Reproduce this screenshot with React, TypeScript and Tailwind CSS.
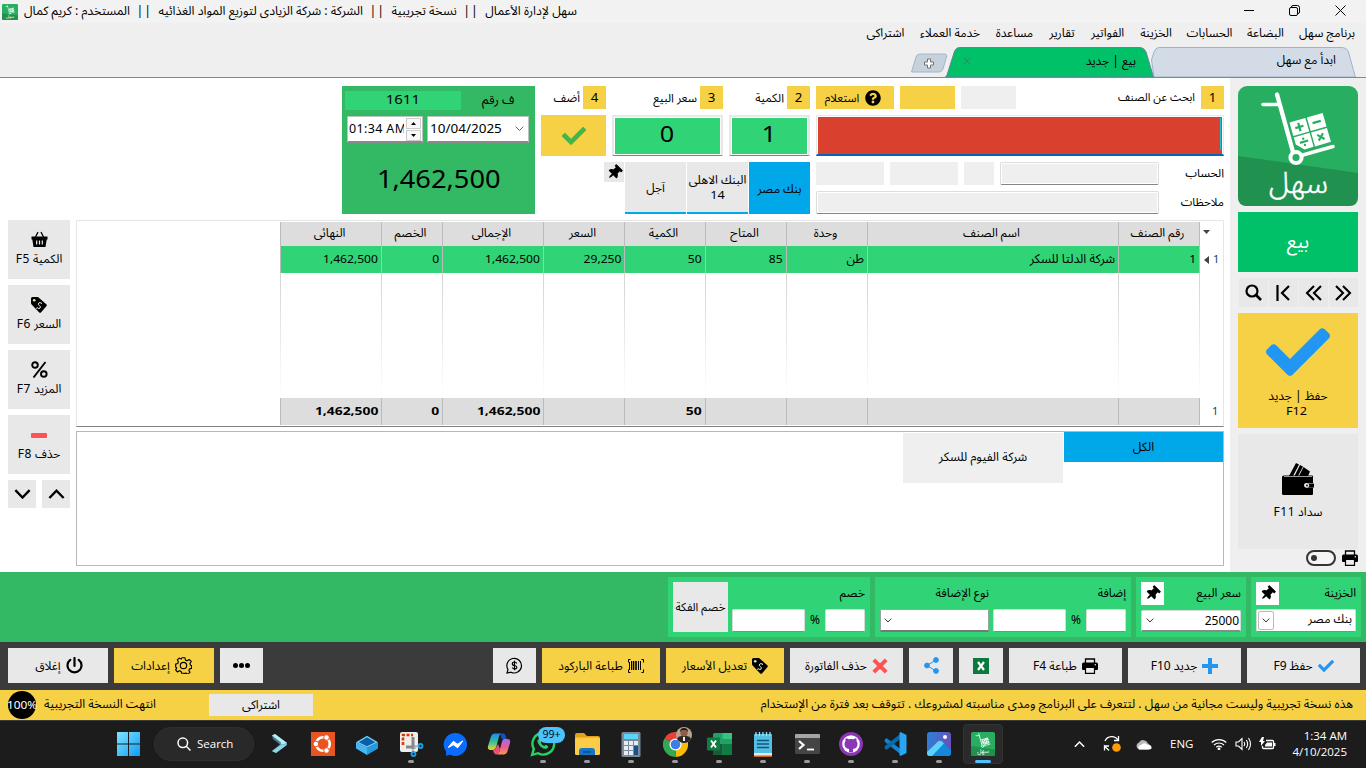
import type { ReactNode } from 'react';
import { FaCheck, FaQuestionCircle, FaThumbtack } from 'react-icons/fa';

const FONT = "font-['Noto_Sans','Noto_Sans_Arabic','DejaVu_Sans',sans-serif]";

function SahlLogo({ size }: { size: number }) {
  return (
    <svg width={size} height={size} viewBox="0 0 120 120">
      <rect width="120" height="120" rx="9" fill="#27ae60" />
      <path d="M0 70 L120 87 V111 Q120 120 111 120 H9 Q0 120 0 111 Z" fill="#219150" />
      <g stroke="#fff" fill="none" strokeLinecap="round" strokeWidth="3.6">
        <path d="M25 18.500H41" />
        <path d="M39 8.500L55 66" strokeWidth="4.400" />
        <path d="M63 69.500L95 60.500" />
        <circle cx="58" cy="71.500" r="5.600" strokeWidth="4" fill="#27ae60" />
      </g>
      <g transform="translate(51.500 36.500) rotate(-16)">
        <rect x="0" y="0" width="16.500" height="14" fill="#fff" />
        <rect x="18" y="0" width="16.500" height="14" fill="#fff" />
        <path d="M0 15.500h16.500V30H7L0 23z" fill="#fff" />
        <rect x="18" y="15.500" width="16.500" height="14.500" fill="#fff" />
        <path d="M4 7h8.500M8.250 2.800v8.500M22 7h8.500M4.500 22.500h8.500M23.200 19.500l6 6M29.200 19.500l-6 6" stroke="#27ae60" strokeWidth="2.200" />
        <circle cx="8.700" cy="19.300" r="1.200" fill="#27ae60" />
        <circle cx="8.700" cy="25.800" r="1.200" fill="#27ae60" />
      </g>
      <text x="60.500" y="107" textAnchor="middle" fill="#fff" stroke="#fff" strokeWidth=".5" fontSize="30" fontFamily="'Noto Sans Arabic','DejaVu Sans',sans-serif" fontWeight="300">
        سهل
      </text>
    </svg>
  );
}

function Num({ n }: { n: string }) {
  return <div className="flex h-[23px] w-[23px] items-center justify-center bg-[#f6d145] text-[12px]"><span className="scale-x-110">{n}</span></div>;
}

function Pin() {
  return <FaThumbtack size={15} className="rotate-45" />;
}

function TagIcon({ size = 16 }: { size?: number }) {
  return (
    <svg width={size} height={size} viewBox="0 0 16 16">
      <path d="M0 1.500Q0 0 1.500 0H7l8.300 7.200q1.100 1 0 2L10.200 15.300q-1.100 1-2.200 0L.6 7.500Q0 6.900 0 6.100z" fill="#000" />
      <circle cx="3.200" cy="3.200" r="1.300" fill="#f4e3a0" />
      <path d="M10.600 6.300Q8.800 4.900 7.700 6.100T8.300 8.500 9.100 11 6 10.600M11 5.800l-.8.800M6 10.800l-.8.700" stroke="#f0f0f0" strokeWidth="1" fill="none" />
    </svg>
  );
}

function PrinterIcon({ size = 17 }: { size?: number }) {
  return (
    <svg width={size} height={size} viewBox="0 0 16 16">
      <path d="M3.500 5V1h9v4" fill="none" stroke="#000" strokeWidth="1.300" />
      <path d="M1.500 4.500h13Q16 4.500 16 6v5q0 1-1 1h-2v-1.500H3V12H1q-1 0-1-1V6q0-1.500 1.500-1.500z" fill="#000" />
      <path d="M3.500 9.500v5.800h9V9.500z" fill="#eee" stroke="#000" strokeWidth="1.200" />
      <circle cx="13.300" cy="6.800" r=".8" fill="#eee" />
    </svg>
  );
}

function Chevron({ up = false, size = 8, w = 1 }: { up?: boolean; size?: number; w?: number }) {
  return (
    <svg width={size} height={size * 0.6} viewBox="0 0 10 6" fill="none" stroke="currentColor" strokeWidth={w}>
      <path d={up ? 'M.8 5.300L5 1l4.200 4.300' : 'M.8.700L5 5 9.200.700'} />
    </svg>
  );
}

function TitleBar() {
  return (
    <div className="flex h-[23px] items-center justify-between bg-[#f2f2f2] pl-[2px] text-[12px] text-black">
      <div className="flex items-center gap-[6px]">
        <SahlLogo size={16} />
        <div dir="rtl" className="flex w-[553px] items-center justify-between whitespace-nowrap text-[12.300px]">
          <span>سهل لإدارة الأعمال</span>
          <span className="tracking-[1px]">||</span>
          <span>نسخة تجريبية</span>
          <span className="tracking-[1px]">||</span>
          <span>الشركة : شركة الزيادى لتوزيع المواد الغذائيه</span>
          <span className="tracking-[1px]">||</span>
          <span>المستخدم : كريم كمال</span>
        </div>
      </div>
      <div className="flex items-center gap-[35px] pr-[20px] pb-[2px]">
        <div className="h-px w-[10px] bg-black" />
        <svg width="11" height="11" viewBox="0 0 11 11" fill="none" stroke="#000">
          <rect x=".5" y="2.500" width="8" height="8" rx="1.500" />
          <path d="M2.500 2.500V2Q2.500.500 4 .500h4.500q2 0 2 2V7q0 1.500-1.500 1.500" />
        </svg>
        <svg width="11" height="11" viewBox="0 0 11 11" stroke="#000"><path d="M.5.500l10 10M10.500.500l-10 10" /></svg>
      </div>
    </div>
  );
}

const menus: [string, number][] = [
  ['برنامج سهل', 56], ['البضاعة', 39], ['الحسابات', 45], ['الخزينة', 34], ['الفواتير', 35],
  ['تقارير', 28], ['مساعدة', 39], ['خدمة العملاء', 62], ['اشتراكى', 39],
];

function MenuBar() {
  return (
    <div dir="rtl" className="flex h-[22px] items-center gap-[14px] bg-[#efefef] pr-[11px] pb-[2px] text-[12px]">
      {menus.map(([m, w]) => (
        <div key={m} className="flex justify-center whitespace-nowrap" style={{ width: w }}>{m}</div>
      ))}
    </div>
  );
}

function Tabs() {
  return (
    <div className="flex h-[33px] items-end border-b border-[#6f8dab] bg-[#efefef] pl-[910px]">
      <div className="relative mb-[4px] flex h-[20px] w-[38px] items-center justify-center">
        <svg className="absolute inset-0" width="38" height="20" viewBox="0 0 38 20">
          <path d="M1.500 19L6 4Q7 1 10 1H34Q37.500 1 36.500 4L33 16Q32 19 29 19Z" fill="#c6d1dc" stroke="#a3b6c9" />
          <path d="M17.500 6h3v3h3v3h-3v3h-3v-3h-3V9h3z" fill="#fff" stroke="#666" strokeWidth=".9" />
        </svg>
      </div>
      <div className="relative z-10 -ml-[3px] flex h-[31px] w-[209px] items-center justify-between pb-[2px] pr-[18px] pl-[18px]">
        <svg className="absolute inset-0" width="209" height="31" viewBox="0 0 210 31" preserveAspectRatio="none">
          <path d="M.5 31Q2 30 3 26L9 7Q10.500 1.500 15 1.500H196Q200 1.500 202 6L208 26Q209 30 209.500 31Z" fill="#00c168" stroke="#5b86a0" />
        </svg>
        <svg className="relative" width="8" height="8" viewBox="0 0 8 8" stroke="#2f8a60" fill="none"><path d="M.5.500l7 7M7.500.500l-7 7" /></svg>
        <span dir="rtl" className="relative text-[12px]">بيع | جديد</span>
      </div>
      <div className="relative -ml-[4px] flex h-[31px] w-[206px] items-center justify-end pr-[20px] pb-[2px]">
        <svg className="absolute inset-0" width="206" height="31" viewBox="0 0 206 31">
          <path d="M4 31L1.500 14L4 6Q5.500 1.500 9 1.500H191Q197 1.500 198.500 6L204 26Q205 30 205.500 31Z" fill="#d3dce6" stroke="#9db4ca" />
        </svg>
        <span dir="rtl" className="relative text-[12.200px]">ابدأ مع سهل</span>
      </div>
    </div>
  );
}

function InvoicePanel() {
  return (
    <div className="flex h-[128px] w-[193px] flex-col bg-[#33b864] pt-[5px]">
      <div className="flex h-[19px] items-center pl-[3px]">
        <div className="flex h-[19px] w-[116px] items-center justify-center bg-[#30d375] pb-px text-[13px]"><span className="scale-x-[1.15]">1611</span></div>
        <span dir="rtl" className="ml-[21px] text-[12.500px]">ف رقم</span>
      </div>
      <div className="mt-[6px] flex gap-[4px] pl-[5px]">
        <div className="flex h-[27px] w-[76px] items-center overflow-hidden border border-b-2 border-[#b9c4bd] border-b-[#8a8a8a] bg-white">
          <span className="w-[56px] overflow-hidden pl-px text-[12.500px] tracking-[0.350px] whitespace-nowrap">01:34 AM</span>
          <div className="ml-[2px] flex flex-col gap-px">
            <div className="flex h-[11px] w-[15px] items-center justify-center border border-[#ccc] bg-[#f8f8f8]"><svg width="5" height="3"><path d="M0 3L2.500 0 5 3z" /></svg></div>
            <div className="flex h-[11px] w-[15px] items-center justify-center border border-[#ccc] bg-[#f8f8f8]"><svg width="5" height="3"><path d="M0 0L2.500 3 5 0z" /></svg></div>
          </div>
        </div>
        <div className="flex h-[27px] w-[102px] items-center justify-between border border-b-2 border-[#b9c4bd] border-b-[#8a8a8a] bg-white pr-[4px] pl-[2px] text-[12px]">
          <span className="origin-left scale-x-[1.125]">10/04/2025</span><span className="text-[#555]"><Chevron size={9} /></span>
        </div>
      </div>
      <div className="flex h-[72px] items-center justify-center text-[25px]"><span className="scale-x-[1.09]">1,462,500</span></div>
    </div>
  );
}

function LabelRow({ n, children }: { n: string; children: ReactNode }) {
  return (
    <div className="flex h-[23px] items-center justify-end gap-[3px] text-[11.800px]">
      <span dir="rtl" className="whitespace-nowrap">{children}</span>
      <Num n={n} />
    </div>
  );
}

const numBox = 'mt-[6px] flex h-[41px] items-center justify-center border-2 border-b border-[#e8e8e8] border-b-[#808080] bg-[#30d375] bg-clip-padding pb-[3px] text-[21px] shadow-[inset_0_0_0_1px_#fff]';
const payTab = 'flex h-[52px] items-center justify-center text-center text-[12px] leading-[15px]';

function EntryArea() {
  return (
    <div className="flex h-[134px] gap-[6px] pl-[342px]">
      <InvoicePanel />
      <div className="w-[269px]">
        <div className="flex gap-[6px]">
          <div className="w-[65px]">
            <LabelRow n="4">أضف</LabelRow>
            <div className="mt-[6px] flex h-[41px] items-center justify-center bg-[#f6d145] text-[#41b649]"><FaCheck size={24} /></div>
          </div>
          <div className="w-[111px]">
            <LabelRow n="3">سعر البيع</LabelRow>
            <div className={numBox}><span className="scale-x-[1.2]">0</span></div>
          </div>
          <div className="w-[81px]">
            <LabelRow n="2">الكمية</LabelRow>
            <div className={numBox}><span className="scale-x-[1.2]">1</span></div>
          </div>
        </div>
        <div className="mt-[6px] flex justify-end gap-px">
          <div className="flex h-[20px] w-[20px] items-center justify-center bg-[#e8e8e8]"><Pin /></div>
          <div className={`${payTab} w-[61px] border-b-2 border-[#00a8ea] bg-[#e8e8e8]`}>آجل</div>
          <div className={`${payTab} w-[61px] border-b-2 border-[#00a8ea] bg-[#e8e8e8] whitespace-nowrap`}><span>البنك الاهلى<br /><span className="inline-block scale-x-110 text-[11.500px]">14</span></span></div>
          <div className={`${payTab} w-[61px] bg-[#00a8ea]`}>بنك مصر</div>
        </div>
      </div>
      <div className="w-[408px]">
        <div className="flex h-[23px] gap-[6px]">
          <div className="flex w-[78px] items-center justify-center gap-[6px] bg-[#f6d145] pr-[4px]"><span className="text-[11.500px]">استعلام</span><FaQuestionCircle size={16} /></div>
          <div className="w-[55px] bg-[#f6d145]" />
          <div className="w-[55px] bg-[#efefef]" />
          <div className="flex flex-1 items-center justify-end gap-[6px] text-[11.200px]"><span dir="rtl">ابحث عن الصنف</span><Num n="1" /></div>
        </div>
        <div className="mt-[6px] flex h-[41px] justify-end border border-b-2 border-[#e8e8e8] border-b-[#0067c0] bg-white p-px pb-0">
          <div className="flex flex-1 justify-end bg-[#d9412e] pr-px"><div className="mt-px mb-1 w-px bg-[#26bed1]" /></div>
        </div>
        <div className="mt-[6px] flex h-[23px] gap-[6px]">
          <div className="w-[68px] bg-[#efefef]" />
          <div className="w-[68px] bg-[#efefef]" />
          <div className="w-[30px] bg-[#efefef]" />
          <div className="w-[159px] rounded-[2px] border border-[#ddd] border-b-[#858585] bg-[#efefef] shadow-[inset_0_0_0_1px_#fff]" />
          <div dir="rtl" className="flex-1 text-[11.900px] leading-[21px]">الحساب</div>
        </div>
        <div className="mt-[6px] flex h-[23px] gap-[6px]">
          <div className="w-[343px] rounded-[2px] border border-[#ddd] border-b-[#858585] bg-[#efefef] shadow-[inset_0_0_0_1px_#fff]" />
          <div dir="rtl" className="flex-1 text-[11.700px] leading-[21px]">ملاحظات</div>
        </div>
      </div>
    </div>
  );
}

function SideButton({ icon, label, f }: { icon: ReactNode; label: string; f: string }) {
  return (
    <div className="flex h-[59px] w-[62px] flex-col items-center bg-[#e8e8e8] pt-[11px] text-[12px]">
      <div className="flex h-[17px] items-center">{icon}</div>
      <span dir="rtl" className="mt-[2px] flex gap-[3px] leading-[18px] whitespace-nowrap">{label}<span className="tracking-[0.600px]">{f}</span></span>
    </div>
  );
}

function SideButtons() {
  return (
    <div className="flex w-[62px] flex-col gap-[6px]">
      <SideButton label="الكمية" f="F5" icon={
        <svg width="17" height="17" viewBox="0 0 17 17"><path d="M4.500 6L7 1M12.500 6L10 1" stroke="#000" strokeWidth="1.300" /><path d="M.5 5.500h16v3h-.8L14.500 16h-12L1.300 8.500H.5z" /><path d="M5.700 9.500v4M8.500 9.500v4M11.300 9.500v4" stroke="#eee" strokeWidth="1.200" /></svg>} />
      <SideButton label="السعر" f="F6" icon={<TagIcon />} />
      <SideButton label="المزيد" f="F7" icon={
        <svg width="17" height="17" viewBox="0 0 17 17" fill="none" stroke="#000" strokeWidth="1.900"><circle cx="4" cy="4" r="2.800" /><circle cx="12.800" cy="13" r="2.800" /><path d="M14.500 1L2.500 16.500" /></svg>} />
      <SideButton label="حذف" f="F8" icon={<div className="mt-px h-[5px] w-[16px] rounded-[1px] bg-[#ff5252]" />} />
      <div className="flex gap-[6px]">
        <div className="flex h-[28px] w-[28px] items-center justify-center bg-[#e8e8e8]"><Chevron size={17} w={1.400} /></div>
        <div className="flex h-[28px] w-[28px] items-center justify-center bg-[#e8e8e8]"><Chevron up size={17} w={1.400} /></div>
      </div>
    </div>
  );
}

const columns = [
  { h: 'النهائى', v: '1,462,500', t: '1,462,500' },
  { h: 'الخصم', v: '0', t: '0' },
  { h: 'الإجمالى', v: '1,462,500', t: '1,462,500' },
  { h: 'السعر', v: '29,250', t: '' },
  { h: 'الكمية', v: '50', t: '50' },
  { h: 'المتاح', v: '85', t: '' },
  { h: 'وحدة', v: 'طن', t: '' },
  { h: 'اسم الصنف', v: 'شركة الدلتا للسكر', t: '' },
  { h: 'رقم الصنف', v: '1', t: '' },
];
const gridCols = 'grid grid-cols-[101px_61px_101px_81px_81px_81px_81px_251px_81px_24px] pl-[203px]';

function ItemsTable() {
  return (
    <div className="h-[207px] border border-[#e6e6e6] border-b-[#808080] bg-white pt-px text-[12px]">
      <div className={`${gridCols} h-[24px]`}>
        {columns.map((c) => <div key={c.h} className="flex items-center justify-center border-l border-[#bbb] bg-[#ddd] pr-[3px] pb-[2px]">{c.h}</div>)}
        <div className="border-l border-[#bbb] pt-[8px] pl-[3px]"><svg width="7" height="4"><path d="M0 0h7L3.500 4z" fill="#444" /></svg></div>
      </div>
      <div className={`${gridCols} h-[27px]`}>
        {columns.map((c) => <div key={c.h} className={`flex items-center justify-end border-l border-[#bbb] bg-[#30d375] pr-[3px] whitespace-nowrap ${/\d/.test(c.v) ? 'text-[11px] pb-px' : 'text-[12.500px]'}`}><span className={/\d/.test(c.v) ? 'origin-right scale-x-[1.1]' : ''}>{c.v}</span></div>)}
        <div className="flex items-center gap-[4px] border-l border-[#bbb] pl-[4px] text-[11px] text-[#1b3f6b]"><svg width="5" height="8"><path d="M5 0v8L0 4z" fill="#444" /></svg>1</div>
      </div>
      <div className={`${gridCols} h-[125px]`}>
        {columns.map((c) => <div key={c.h} className="w-px bg-linear-to-b from-[#d4d4d4] to-white" />)}
        <div className="w-px bg-linear-to-b from-[#d4d4d4] to-white" />
      </div>
      <div className={`${gridCols} h-[27px] text-[11px] font-bold`}>
        {columns.map((c) => <div key={c.h} className="flex items-center justify-end border-l border-[#bbb] bg-[#ddd] pr-[3px] pb-px"><span className="origin-right scale-x-[1.26]">{c.t}</span></div>)}
        <div className="flex items-center border-l border-[#bbb] pl-[12px] text-[11px] font-normal text-[#1b3f6b]">1</div>
      </div>
    </div>
  );
}

const navCell = 'flex flex-1 items-center justify-center bg-[#e8e8e8] pr-px';

function Sidebar() {
  return (
    <div className="flex w-[136px] flex-col bg-[#efefef] pt-[8px] pl-[8px]">
      <SahlLogo size={120} />
      <div className="mt-[6px] flex h-[60px] w-[120px] items-center justify-center bg-[#00c168] pb-[2px] text-[19px] text-white">بيع</div>
      <div className="mt-[6px] ml-px flex h-[29px] w-[119px] gap-px">
        <div className={navCell}><svg width="17" height="17" viewBox="0 0 17 17" fill="none" stroke="#000" strokeWidth="2.200"><circle cx="7" cy="7" r="5.500" /><path d="M11 11l5 5" strokeWidth="2.600" /></svg></div>
        <div className={navCell}><svg width="14" height="16" viewBox="0 0 14 16" fill="none" stroke="#000" strokeWidth="2.200"><path d="M1.500 0v16M13 1L6 8l7 7" /></svg></div>
        <div className={navCell}><svg width="17" height="16" viewBox="0 0 17 16" fill="none" stroke="#000" strokeWidth="2.100"><path d="M9 1L2 8l7 7M16 1L9 8l7 7" /></svg></div>
        <div className={navCell}><svg width="17" height="16" viewBox="0 0 17 16" fill="none" stroke="#000" strokeWidth="2.100"><path d="M1 1l7 7-7 7M8 1l7 7-7 7" /></svg></div>
      </div>
      <div className="mt-[6px] flex h-[115px] w-[120px] flex-col items-center bg-[#f6d145] pt-[7px] text-[12px] leading-[15px]">
        <FaCheck size={64} color="#2196f3" />
        <span dir="rtl" className="mt-[4px]">حفظ | جديد</span>
        <span className="-ml-[2px] scale-x-110 text-[11.500px]">F12</span>
      </div>
      <div className="mt-[6px] flex h-[115px] w-[120px] flex-col items-center bg-[#e8e8e8] pt-[29px] text-[12px]">
        <svg width="32" height="32" viewBox="0 0 32 32">
          <path d="M7 13L14 0l3 1.500L11 13zM12.500 13L18 2l3 1.500L16 13zM17 13l4.500-9L28 8.500 26 13z" />
          <path d="M2 12.500h28q1 0 1 1V20h-6.500q-2.500 0-2.500 2.300t2.500 2.200H31V31q0 1-1 1H1.500Q0 32 0 30.500V14q0-1.500 2-1.500z" />
          <path d="M2 13.500H30" stroke="#ddd" strokeWidth=".7" />
          <path d="M25 20.500h7v4h-7q-2-2 0-4z" /><circle cx="25" cy="22.500" r="2.200" fill="#eee" /><circle cx="25" cy="22.500" r=".9" />
        </svg>
        <span dir="rtl" className="mt-[8px] flex gap-[3px]">سداد<span className="tracking-[0.500px]">F11</span></span>
      </div>
      <div className="mt-px flex w-[120px] items-center justify-end gap-[6px]">
        <div className="flex h-[16px] w-[30px] items-center rounded-full border-2 border-[#333] bg-[#f4f4f4] pl-[3px]"><div className="h-[6px] w-[6px] rounded-full bg-[#333]" /></div>
        <PrinterIcon size={16} />
      </div>
    </div>
  );
}

const group = 'flex h-[60px] bg-[#30d375] p-[5px]';
const input = 'h-[23px] rounded-[2px] border border-[#d5dcd8] border-b-[#8a8a8a] bg-white';
const glabel = 'h-[23px] text-[12px] leading-[21px] whitespace-nowrap';

function TotalsBar() {
  return (
    <div className="flex h-[70px] gap-[5px] bg-[#33b864] pt-[5px] pl-[668px]">
      <div className={`${group} w-[202px] gap-[4px]`}>
        <div className="flex h-[50px] w-[55px] items-center justify-center bg-[#e8e8e8] text-[11.500px] whitespace-nowrap">خصم الفكة</div>
        <div className="w-[133px]">
          <div dir="rtl" className={glabel}>خصم</div>
          <div className="mt-1 flex items-center justify-between text-[12px]"><div className={`${input} w-[73px]`} /><span className="-mt-[2px]">%</span><div className={`${input} w-[40px]`} /></div>
        </div>
      </div>
      <div className={`${group} w-[256px] gap-[4px]`}>
        <div className="w-[109px]">
          <div dir="rtl" className={glabel}>نوع الإضافة</div>
          <div className="mt-1 flex h-[23px] items-center border border-b-2 border-[#8fa99a] border-b-[#777] bg-white pl-[3px]"><Chevron size={8} /></div>
        </div>
        <div className="w-[133px]">
          <div dir="rtl" className={glabel}>إضافة</div>
          <div className="mt-1 flex items-center justify-between text-[12px]"><div className={`${input} w-[73px]`} /><span className="-mt-[2px]">%</span><div className={`${input} w-[40px]`} /></div>
        </div>
      </div>
      <div className={`${group} w-[110px] flex-col`}>
        <div className="flex justify-between"><div className="flex h-[23px] w-[23px] items-center justify-center bg-white"><Pin /></div><span dir="rtl" className={glabel}>سعر البيع</span></div>
        <div className={`${input} mt-[5px] flex items-center justify-between border-b-2 pr-px pl-[4px] text-[12px]`}><Chevron size={8} />25000</div>
      </div>
      <div className={`${group} w-[110px] flex-col`}>
        <div className="flex justify-between"><div className="flex h-[23px] w-[23px] items-center justify-center bg-white"><Pin /></div><span dir="rtl" className={glabel}>الخزينة</span></div>
        <div className={`${input} mt-1 flex items-center justify-between pr-[3px] pl-px text-[12px]`}><div className="flex h-[19px] w-[16px] items-center justify-center rounded-[2px] border border-[#bbb]"><Chevron size={8} /></div><span className="-mt-[3px]">بنك مصر</span></div>
      </div>
    </div>
  );
}

const btn = 'flex h-[35px] items-center justify-center gap-[5px] text-[12px] whitespace-nowrap';

function ActionBar() {
  return (
    <div className="flex h-[48px] gap-[6px] bg-[#3b3b3b] pt-[6px] pr-[6px] pl-[8px]">
      <div dir="rtl" className={`${btn} w-[100px] bg-[#e8e8e8] pl-[2px]`}>
        <svg width="17" height="17" viewBox="0 0 17 17" fill="none" stroke="#000" strokeWidth="2.200" strokeLinecap="round"><path d="M4.300 2.800a7 7 0 1 0 8.400 0M8.500 1v8" /></svg>إغلاق
      </div>
      <div dir="rtl" className={`${btn} w-[100px] bg-[#f6d145] pr-[5px]`}>
        <svg width="17" height="17" viewBox="0 0 24 24" fill="none" stroke="#000" strokeWidth="1.600"><path d="M10 1h4l.8 3.400 2.300 1 3-1.900 2.800 2.800-1.900 3 .9 2.300 1.600.4v4l-3 .7-.9 2.200 1.500 2.700-2.900 2.800-2.800-1.700-2 .8L12.500 23h-3l-1-2.700-2.300-.8-2.900 1.500-2.400-2.800L2.400 15.500.9 14v-4l3-.8.9-2.300L3.200 4 6 1.500 8.600 3z" strokeLinejoin="round" /><circle cx="12" cy="12" r="4.500" /></svg>إعدادات
      </div>
      <div className={`${btn} w-[43px] gap-px bg-[#e8e8e8]`}>
        <i className="h-[5px] w-[5px] rounded-full bg-black" /><i className="h-[5px] w-[5px] rounded-full bg-black" /><i className="h-[5px] w-[5px] rounded-full bg-black" />
      </div>
      <div className="flex-1" />
      <div className={`${btn} w-[43px] bg-[#e8e8e8]`}>
        <svg width="17" height="17" viewBox="0 0 17 17" fill="none" stroke="#000" strokeWidth="1.200"><path d="M1 16l1-3.500A7.300 7.300 0 1 1 5 15.200Z" /><path d="M10.800 6.500Q10 5 8.500 5 6.300 5 6.300 6.700T8.500 8.500t2.300 1.800T8.500 12Q7 12 6.200 10.500M8.500 3.700v9.600" /></svg>
      </div>
      <div dir="rtl" className={`${btn} w-[118px] bg-[#f6d145]`}>
        <svg width="16" height="14" viewBox="0 0 16 14" fill="none" stroke="#000"><path d="M2.500 .5H.5v3M.5 10.500v3h2M13.500 .5h2v3M15.500 10.500v3h-2" /><path d="M3.500 2v9M12.500 2v9M10.500 2v9M1.500 3v8" /><path d="M5.500 2v9M8 2v9" strokeWidth="1.600" /></svg>طباعة الباركود
      </div>
      <div dir="rtl" className={`${btn} w-[118px] bg-[#f6d145]`}><TagIcon size={16} />تعديل الأسعار</div>
      <div dir="rtl" className={`${btn} w-[113px] bg-[#e8e8e8]`}>
        <svg width="16" height="16" viewBox="0 0 16 16" stroke="#ff5252" strokeWidth="4"><path d="M1.800 1.800l12.400 12.400M14.200 1.800L1.800 14.200" /></svg>حذف الفاتورة
      </div>
      <div className={`${btn} w-[44px] bg-[#e8e8e8]`}>
        <svg width="15" height="17" viewBox="0 0 15 17" fill="#2196f3" stroke="#2196f3"><path d="M12 3L3 8.500l9 5.500" fill="none" /><circle cx="12" cy="3" r="2.400" /><circle cx="3" cy="8.500" r="2.400" /><circle cx="12" cy="14" r="2.400" /></svg>
      </div>
      <div className={`${btn} w-[44px] bg-[#e8e8e8]`}>
        <svg width="16" height="16" viewBox="0 0 16 16"><rect width="16" height="16" fill="#0b7a3e" /><path d="M5 4l6 8M11 4l-6 8" stroke="#fff" strokeWidth="2.200" /></svg>
      </div>
      <div dir="rtl" className={`${btn} w-[113px] bg-[#e8e8e8]`}><PrinterIcon size={16} />طباعة F4</div>
      <div dir="rtl" className={`${btn} w-[113px] bg-[#e8e8e8]`}>
        <svg width="16" height="16" viewBox="0 0 16 16"><path d="M6 0h4v6h6v4h-6v6H6v-6H0V6h6z" fill="#2196f3" /></svg>جديد F10
      </div>
      <div dir="rtl" className={`${btn} w-[113px] bg-[#e8e8e8]`}><FaCheck size={16} color="#2196f3" />حفظ F9</div>
    </div>
  );
}

function TrialBar() {
  return (
    <div className="flex h-[30px] items-center bg-[#f6d145] pr-[13px] pl-[8px] text-[12px]">
      <div className="flex h-[28px] w-[28px] shrink-0 items-center justify-center rounded-full bg-black text-[11px] text-white"><span className="scale-x-[1.08]">100%</span></div>
      <div dir="rtl" className="ml-[7px] w-[113px] pb-[2px] text-[12.200px] whitespace-nowrap">انتهت النسخة التجريبية</div>
      <div className="ml-[53px] flex h-[22px] w-[104px] items-center justify-center bg-[#e8e8e8]">اشتراكى</div>
      <div dir="rtl" className="flex-1 pb-[2px] text-[12.250px] whitespace-nowrap">هذه نسخة تجريبية وليست مجانية من سهل . لتتعرف على البرنامج ومدى مناسبته لمشروعك . تتوقف بعد فترة من الإستخدام</div>
    </div>
  );
}

const apps: { id: string; run?: boolean; icon: ReactNode }[] = [
  { id: 'shell', icon: <svg width="24" height="24" viewBox="0 0 24 24"><path d="M5 3.500L8 2l12 9v2L9 21l-4-2 8-6.500z" fill="#5aa9c0" /><path d="M5 3.500L8 2l12 9-5 1.500z" fill="#bcebf0" /><path d="M5 19l10-6.500h5L9 21z" fill="#8fd6e2" /><path d="M5 3.500l9 7-1 2L6 7z" fill="#3c8098" /></svg> },
  { id: 'ubuntu', icon: <svg width="24" height="24" viewBox="0 0 24 24"><rect width="24" height="24" fill="#e95420" /><circle cx="12" cy="12" r="6.800" fill="none" stroke="#fff" strokeWidth="2.600" /><g fill="#fff" stroke="#e95420" strokeWidth="1"><circle cx="4.800" cy="12" r="2.800" /><circle cx="15.500" cy="5.500" r="2.800" /><circle cx="15.500" cy="18.500" r="2.800" /></g></svg> },
  { id: 'sandbox', icon: <svg width="24" height="22" viewBox="0 0 26 24"><path d="M1 10l12 6v8L1 17z" fill="#45b8f3" /><path d="M25 10l-12 6v8l12-7z" fill="#2799e0" /><path d="M13 3l12 7-12 6L1 10z" fill="#6ed0fa" /><path d="M13 4.500l9 5.500-9 4.500L4 10z" fill="#0a5ea8" /></svg> },
  { id: 'snip', run: true, icon: <svg width="26" height="26" viewBox="0 0 26 26"><rect x="2" y="1" width="18" height="20" rx="2" fill="#eee" /><path d="M5 14V4h10" fill="none" stroke="#d83b01" strokeWidth="2.600" strokeDasharray="3 1.500" /><path d="M15 6v12M8 16h10" stroke="#888" strokeWidth="3" /><path d="M16 17l5-3M15 18v4" stroke="#bbb" strokeWidth="2" /><g fill="none" stroke="#1ba0e8" strokeWidth="1.800"><circle cx="22.500" cy="15" r="2" /><circle cx="15.500" cy="23" r="2" /></g></svg> },
  { id: 'messenger', icon: <svg width="25" height="25" viewBox="0 0 24 24"><path d="M12 1a11 11 0 1 1-5.500 20.500L3 23v-4.300A11 11 0 0 1 12 1z" fill="#0a6cff" /><path d="M5 15l5-6 4 3 5-3.500-5 6.500-4-3z" fill="#fff" stroke="#fff" /></svg> },
  { id: 'copilot', icon: (
    <svg width="24" height="24" viewBox="0 0 24 24"><defs><linearGradient id="ca" x1="0" y1="0" x2="0" y2="1"><stop offset="0" stopColor="#1b8af0" /><stop offset=".5" stopColor="#35bf9c" /><stop offset="1" stopColor="#f5cf2f" /></linearGradient><linearGradient id="cb" x1="0" y1="0" x2="0" y2="1"><stop offset="0" stopColor="#a26be8" /><stop offset=".55" stopColor="#ee5c94" /><stop offset="1" stopColor="#f79a46" /></linearGradient></defs><path d="M13 1.500h3q2 0 2.600 2L19.500 7H15z" fill="#1552c0" /><path d="M8 1.500h6q-1.500 1-2 3L9.500 14q-1 4-4 4H4Q0 18 1 14L4 4.500Q5 1.500 8 1.500z" fill="url(#ca)" /><path d="M17 7h3q4 0 3 4l-2.600 8.500q-1 3-4 3H10q1.700-1 2.300-3L15 9.500Q15.500 7 17 7z" fill="url(#cb)" /><path d="M6 18.500q2.500-.5 3.500-3.500l1.500-3 2 5-1 3.500q-.7 2-2.500 2-2 0-2.700-2z" fill="#e8527a" /></svg>) },
  { id: 'whatsapp', run: true, icon: (
    <><svg width="26" height="26" viewBox="0 0 24 24"><path d="M2 22l1.500-5.500A10 10 0 1 1 7.500 20.500z" fill="none" stroke="#25d366" strokeWidth="2.200" /><path d="M8 7.500q1-1 2 .5l.7 1.500-.8 1.300q1 2 3.200 3l1.400-1 2 1q.8.500 0 1.600-2 2-5 .3T7.300 11 8 7.500z" fill="#25d366" /></svg>
      <span className="absolute top-px left-[17px] flex h-[16px] w-[27px] items-center justify-center rounded-full bg-[#4cc2ff] text-[10.500px] text-black">99+</span></>) },
  { id: 'explorer', run: true, icon: <svg width="25" height="24" viewBox="0 0 25 24"><path d="M0 3q0-2 2-2h7l3 3h11q2 0 2 2v5H0z" fill="#e3a117" /><rect y="5.500" width="25" height="17.500" rx="1.500" fill="#fccb47" /><path d="M4 23v-4q0-3 3-3h10q3 0 3 3v4z" fill="#1577c4" /><path d="M8 20h8" stroke="#0c4c8a" strokeWidth="1.500" /></svg> },
  { id: 'calc', run: true, icon: <svg width="20" height="25" viewBox="0 0 20 25"><rect x=".5" width="19" height="25" rx="1.500" fill="#7b8a98" /><rect x="3" y="2" width="14" height="5" fill="#5cd4f7" /><path d="M3 9h4v4H3zM8 9h4v4H8zM13 9h4v4h-4zM3 14h4v4H3zM8 14h4v4H8zM3 19h4v4H3zM8 19h4v4H8z" fill="#e8ecf0" /><path d="M13 14h4v9h-4z" fill="#16508e" /></svg> },
  { id: 'chrome', run: true, icon: (
    <><svg width="25" height="25" viewBox="0 0 24 24"><path d="M12 12L1.600 6A12 12 0 0 1 22.400 6z" fill="#e94235" /><path d="M12 12L22.400 6A12 12 0 0 1 12 24z" fill="#fbbc05" /><path d="M12 12v12A12 12 0 0 1 1.600 6z" fill="#34a853" /><circle cx="12" cy="12" r="5.800" fill="#fff" /><circle cx="12" cy="12" r="4.600" fill="#3b7de9" /></svg>
      <span className="absolute top-px left-[23px]"><svg width="16" height="16" viewBox="0 0 16 16"><circle cx="8" cy="8" r="8" fill="#b8a48f" /><path d="M1 12q1-3 5-3h4q4 0 5 3-3 4-7 4t-7-4z" fill="#292523" /><circle cx="8" cy="6" r="3.600" fill="#8f5c46" /><path d="M4 5q0-4 4-4t4 4l-2-2H6z" fill="#221a17" /><path d="M7 10h2v4H7z" fill="#eee" /></svg></span></>) },
  { id: 'excel', run: true, icon: <svg width="25" height="24" viewBox="0 0 25 24"><rect x="6" y="1" width="19" height="22" rx="1.500" fill="#21a366" /><path d="M6 12h9.500v11H7.500Q6 23 6 21.500z" fill="#185c37" /><path d="M15.500 1H25v6h-9.500z" fill="#33c481" /><path d="M15.500 12H25v9.500L23.500 23h-8z" fill="#107c41" /><rect y="5.500" width="13" height="13" rx="1" fill="#107c41" /><path d="M4 8.500l5 7M9 8.500l-5 7" stroke="#fff" strokeWidth="1.900" /></svg> },
  { id: 'notepad', run: true, icon: <svg width="20" height="25" viewBox="0 0 20 25"><rect x="1" y="2" width="18" height="22" rx="1" fill="#52bfe3" /><path d="M1 21h18v4H1z" fill="#e8e8e8" /><path d="M1 23.500h18V25H1z" fill="#c9641c" /><path d="M4 8.500h12M4 12h12M4 15.500h12" stroke="#11557c" strokeWidth="1.500" /><path d="M3 0v4M6.500 0v4M10 0v4M13.500 0v4M17 0v4" stroke="#9be4f7" strokeWidth="1.300" /></svg> },
  { id: 'terminal', run: true, icon: <svg width="25" height="20" viewBox="0 0 25 20"><rect width="25" height="20" rx="1.500" fill="#454545" /><path d="M1 0h23q1 0 1 1v3H0V1q0-1 1-1z" fill="#a5a5a5" /><path d="M4 7l4.500 4L4 15" fill="none" stroke="#fff" strokeWidth="2.200" /><path d="M12 15.500h7" stroke="#fff" strokeWidth="1.800" /></svg> },
  { id: 'github', run: true, icon: <svg width="24" height="24" viewBox="0 0 24 24"><circle cx="12" cy="12" r="12" fill="#8b36b4" /><circle cx="12" cy="12" r="8.800" fill="#fff" /><path d="M10 20v-3q-4.500-.5-4.500-5 0-2 1-3-.3-1.500.3-2.800 1.500 0 2.700 1 2.500-.6 5 0 1.300-1 2.700-1 .6 1.300.3 2.800 1 1.200 1 3 0 4.500-4.500 5v3.500z" fill="#8b36b4" /></svg> },
  { id: 'vscode', run: true, icon: <svg width="25" height="24" viewBox="0 0 24 24"><path d="M1 8l2-2 15 12v5L1.500 10z" fill="#1483cf" /><path d="M1 16l2 2L18 6V1L1.500 14z" fill="#0769b0" /><path d="M17 0l6 3v18l-6 3-1-1V1z" fill="#29a5f1" /></svg> },
  { id: 'photos', run: true, icon: <svg width="24" height="24" viewBox="0 0 24 24"><defs><linearGradient id="ph" x1="0" y1="0" x2="1" y2=".3"><stop stopColor="#2683d8" /><stop offset="1" stopColor="#6952b7" /></linearGradient></defs><rect width="24" height="24" rx="3" fill="url(#ph)" /><path d="M0 21L11 9.500q2-1.500 4 0L24 18v3q0 3-3 3H3q-3 0-3-3z" fill="#1687d9" /><path d="M0 20L11 9.500q2-1.500 4 0l2 2L5 24H3q-3 0-3-3z" fill="#58d5fb" /><circle cx="18" cy="5" r="2" fill="#fff" /></svg> },
];

function Taskbar() {
  return (
    <div className="flex h-[48px] items-center border-t border-[#3a3a3a] bg-[#1c1c1c] pb-px pl-[117px] font-['Open_Sans','Noto_Sans',sans-serif] text-white">
      <svg width="23" height="24" viewBox="0 0 23 24"><defs><linearGradient id="wn" x1="0" y1="0" x2="1" y2="1"><stop stopColor="#7fe4ff" /><stop offset="1" stopColor="#129cf3" /></linearGradient></defs><path d="M0 0h11v11.500H0zM12 0h11v11.500H12zM0 12.500h11V24H0zM12 12.500h11V24H12z" fill="url(#wn)" /></svg>
      <div className="ml-[14px] flex h-[34px] w-[100px] items-center gap-[6px] rounded-full border border-[#303030] bg-[#292929] pl-[22px] text-[11.500px]">
        <svg width="14" height="14" viewBox="0 0 14 14" fill="none" stroke="#fff" strokeWidth="1.500"><circle cx="5.800" cy="5.800" r="4.800" /><path d="M9.300 9.300l4.200 4.200" /></svg>Search
      </div>
      <div className="ml-[3px] flex h-full">
        {apps.map((a) => (
          <div key={a.id} className="relative flex h-full w-[44px] items-center justify-center">
            <div className="relative flex h-[36px] w-[44px] items-center justify-center">{a.icon}</div>
            {a.run && <span className="absolute bottom-[4px] left-[19px] h-[3px] w-[6px] rounded-full bg-[#9a9a9a]" />}
          </div>
        ))}
        <div className="relative mt-[3px] ml-[2px] flex h-[40px] w-[40px] items-center justify-center rounded-[4px] border border-[#333] bg-[#2a2a2a]">
          <SahlLogo size={24} />
          <span className="absolute bottom-0 left-[11px] h-[3px] w-[16px] rounded-full bg-[#4cc2ff]" />
        </div>
      </div>
      <div className="ml-[71px] flex items-center"><Chevron up size={11} w={1.300} /></div>
      <svg className="ml-[18px]" width="19" height="18" viewBox="0 0 19 18" fill="none" stroke="#fff" strokeWidth="1.300"><path d="M2 6A7.500 7.500 0 0 1 15 5M15.500 1v4.500H11M6 15.500L1.500 11v4.500M1.500 11H6" /><circle cx="13.500" cy="12.500" r="4.300" fill="#ff9d0a" stroke="none" /></svg>
      <svg className="ml-[13px]" width="17" height="11" viewBox="0 0 17 11"><path d="M4 10.500a3.700 3.700 0 0 1 0-7 5 5 0 0 1 9 1 3.200 3.200 0 0 1 0 6z" fill="#b9b9b9" /><path d="M4 10.500q-2-4 2-4.500 3-3 6-.5 4 0 4.500 2.500T14 10.500z" fill="#fff" /></svg>
      <span className="ml-[18px] text-[11.500px]">ENG</span>
      <svg className="ml-[18px]" width="16" height="12" viewBox="0 0 16 12" fill="none" stroke="#fff" strokeWidth="1.200"><path d="M.7 4.500a10.500 10.500 0 0 1 14.600 0M3 7a7.200 7.200 0 0 1 10 0M5.300 9.300a4 4 0 0 1 5.400 0" /><circle cx="8" cy="11" r=".8" fill="#fff" /></svg>
      <svg className="ml-[8px]" width="17" height="14" viewBox="0 0 17 14" fill="none" stroke="#fff" strokeWidth="1.100"><path d="M1 5h2.500L7 1.500v11L3.500 9H1zM9 5q1.300 2 0 4M11.300 3q2.700 4 0 8M13.500 1q4 6 0 12" /></svg>
      <svg className="ml-[7px]" width="17" height="14" viewBox="0 0 17 14"><path d="M7 3.500h6.500q1 0 1 1v6q0 1-1 1h-9q-1 0-1-1V9" fill="none" stroke="#fff" strokeWidth="1.300" /><path d="M8 5.500h5v4H6V8zM15 6h1.500v3H15z" fill="#fff" /><path d="M3 0L0 5h2v4l4-5H4l1-4z" fill="#fff" /></svg>
      <div className="flex-1 pr-[19px] text-right text-[11.500px] leading-[16px]">1:34 AM<br />4/10/2025</div>
    </div>
  );
}

export default function App() {
  return (
    <div dir="ltr" className={`${FONT} h-[768px] w-[1366px] overflow-hidden bg-white text-black`}>
      <TitleBar />
      <MenuBar />
      <Tabs />
      <div className="flex h-[494px]">
        <div className="w-[1230px] bg-white pt-[8px]">
          <EntryArea />
          <div className="flex gap-[6px] pl-[8px]">
            <SideButtons />
            <div className="w-[1148px]">
              <ItemsTable />
              <div className="mt-[4px] flex h-[135px] justify-end gap-px border border-[#b8b8b8] text-[12.300px]">
                <div className="mt-px flex h-[50px] w-[160px] items-center justify-center bg-[#efefef] pb-[2px]">شركة الفيوم للسكر</div>
                <div className="flex h-[30px] w-[159px] items-center justify-center bg-[#00a8ea]">الكل</div>
              </div>
            </div>
          </div>
        </div>
        <Sidebar />
      </div>
      <TotalsBar />
      <ActionBar />
      <TrialBar />
      <Taskbar />
    </div>
  );
}
